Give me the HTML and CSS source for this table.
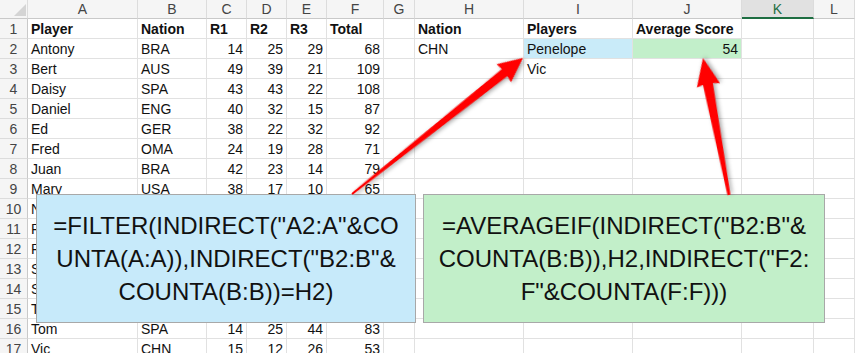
FILE: index.html
```html
<!DOCTYPE html>
<html>
<head>
<meta charset="utf-8">
<link rel="stylesheet" href="styles.css">
</head>
<body>
<div class="sheet">
  <div class="row hdr">
    <span class="corner"><svg width="12" height="12" viewBox="0 0 12 12"><polygon points="12,0 12,12 0,12" fill="#d4d4d4"/></svg></span>
    <span class="ch">A</span><span class="ch">B</span><span class="ch">C</span><span class="ch">D</span><span class="ch">E</span><span class="ch">F</span><span class="ch">G</span><span class="ch">H</span><span class="ch">I</span><span class="ch">J</span><span class="ch sel">K</span><span class="ch">L</span>
  </div>
  <div class="row"><span class="rh">1</span><span class="b">Player</span><span class="b">Nation</span><span class="b">R1</span><span class="b">R2</span><span class="b">R3</span><span class="b">Total</span><span></span><span class="b">Nation</span><span class="b">Players</span><span class="b">Average Score</span><span></span><span></span></div>
  <div class="row"><span class="rh">2</span><span>Antony</span><span>BRA</span><span class="n">14</span><span class="n">25</span><span class="n">29</span><span class="n">68</span><span></span><span>CHN</span><span class="blue">Penelope</span><span class="n green">54</span><span></span><span></span></div>
  <div class="row"><span class="rh">3</span><span>Bert</span><span>AUS</span><span class="n">49</span><span class="n">39</span><span class="n">21</span><span class="n">109</span><span></span><span></span><span>Vic</span><span></span><span></span><span></span></div>
  <div class="row"><span class="rh">4</span><span>Daisy</span><span>SPA</span><span class="n">43</span><span class="n">43</span><span class="n">22</span><span class="n">108</span><span></span><span></span><span></span><span></span><span></span><span></span></div>
  <div class="row"><span class="rh">5</span><span>Daniel</span><span>ENG</span><span class="n">40</span><span class="n">32</span><span class="n">15</span><span class="n">87</span><span></span><span></span><span></span><span></span><span></span><span></span></div>
  <div class="row"><span class="rh">6</span><span>Ed</span><span>GER</span><span class="n">38</span><span class="n">22</span><span class="n">32</span><span class="n">92</span><span></span><span></span><span></span><span></span><span></span><span></span></div>
  <div class="row"><span class="rh">7</span><span>Fred</span><span>OMA</span><span class="n">24</span><span class="n">19</span><span class="n">28</span><span class="n">71</span><span></span><span></span><span></span><span></span><span></span><span></span></div>
  <div class="row"><span class="rh">8</span><span>Juan</span><span>BRA</span><span class="n">42</span><span class="n">23</span><span class="n">14</span><span class="n">79</span><span></span><span></span><span></span><span></span><span></span><span></span></div>
  <div class="row"><span class="rh">9</span><span>Mary</span><span>USA</span><span class="n">38</span><span class="n">17</span><span class="n">10</span><span class="n">65</span><span></span><span></span><span></span><span></span><span></span><span></span></div>
  <div class="row"><span class="rh">10</span><span>Nina</span><span>ENG</span><span class="n">31</span><span class="n">28</span><span class="n">20</span><span class="n">79</span><span></span><span></span><span></span><span></span><span></span><span></span></div>
  <div class="row"><span class="rh">11</span><span>Paul</span><span>GER</span><span class="n">22</span><span class="n">35</span><span class="n">18</span><span class="n">75</span><span></span><span></span><span></span><span></span><span></span><span></span></div>
  <div class="row"><span class="rh">12</span><span>Penelope</span><span>CHN</span><span class="n">20</span><span class="n">16</span><span class="n">19</span><span class="n">55</span><span></span><span></span><span></span><span></span><span></span><span></span></div>
  <div class="row"><span class="rh">13</span><span>Sam</span><span>AUS</span><span class="n">27</span><span class="n">30</span><span class="n">24</span><span class="n">81</span><span></span><span></span><span></span><span></span><span></span><span></span></div>
  <div class="row"><span class="rh">14</span><span>Steve</span><span>USA</span><span class="n">33</span><span class="n">21</span><span class="n">29</span><span class="n">83</span><span></span><span></span><span></span><span></span><span></span><span></span></div>
  <div class="row"><span class="rh">15</span><span>Tara</span><span>OMA</span><span class="n">19</span><span class="n">26</span><span class="n">31</span><span class="n">76</span><span></span><span></span><span></span><span></span><span></span><span></span></div>
  <div class="row"><span class="rh">16</span><span>Tom</span><span>SPA</span><span class="n">14</span><span class="n">25</span><span class="n">44</span><span class="n">83</span><span></span><span></span><span></span><span></span><span></span><span></span></div>
  <div class="row"><span class="rh">17</span><span>Vic</span><span>CHN</span><span class="n">15</span><span class="n">12</span><span class="n">26</span><span class="n">53</span><span></span><span></span><span></span><span></span><span></span><span></span></div>
</div>

<div class="callout callout-blue">
  <p>=FILTER(INDIRECT("A2:A"&amp;CO<br>UNTA(A:A)),INDIRECT("B2:B"&amp;<br>COUNTA(B:B))=H2)</p>
</div>
<div class="callout callout-green">
  <p>=AVERAGEIF(INDIRECT("B2:B"&amp;<br>COUNTA(B:B)),H2,INDIRECT("F2:<br>F"&amp;COUNTA(F:F)))</p>
</div>

<svg class="arrows" width="855" height="353" viewBox="0 0 855 353">
  <polygon class="arrow" transform="translate(352,194) rotate(-38.5)" points="0,-1 195,-4.5 194,-11.5 218.5,0 194,11.5 195,4.5 0,1"/>
  <polygon class="arrow" transform="translate(729,195) rotate(-100.75)" points="0,-1.5 113,-5 111.5,-11.5 139.4,0 111.5,12 113,5 0,1.5"/>
</svg>
</body>
</html>
```

FILE: styles.css
```css
html, body {
  margin: 0;
  padding: 0;
  background: #ffffff;
  overflow: hidden;
}
body {
  width: 855px;
  height: 353px;
  position: relative;
  font-family: "Liberation Sans", Arial, sans-serif;
  color: #111111;
}
.sheet {
  display: flex;
  flex-direction: column;
}
.row {
  display: grid;
  grid-template-columns: 28px 110px 69px 40px 40px 40px 57px 31px 109px 109px 109px 72px 1fr;
  height: 20px;
}
.row > span {
  box-sizing: border-box;
  border-right: 1px solid #e1e1e1;
  border-bottom: 1px solid #e1e1e1;
  font-size: 14px;
  line-height: 20px;
  padding: 0 3px 0 3px;
  white-space: nowrap;
  overflow: hidden;
}
.row.hdr {
  height: 19px;
}
.row.hdr > span {
  background: #f5f5f5;
  border-right: 1px solid #dcdcdc;
  border-bottom: 1px solid #c9c9c9;
  line-height: 19px;
  text-align: center;
  color: #444444;
  font-size: 14px;
}
.row.hdr > span.corner {
  display: flex;
  align-items: flex-end;
  justify-content: flex-end;
  padding: 0 1px 2px 0;
}
.row.hdr > span.sel {
  background: #e1e1e1;
  border-bottom: 2px solid #1e6e42;
  color: #1e6e42;
  line-height: 18px;
}
.row > span.rh {
  background: #f5f5f5;
  border-right: 1px solid #c9c9c9;
  border-bottom: 1px solid #dcdcdc;
  text-align: center;
  color: #444444;
  padding: 0;
}
.row > span.b {
  font-weight: bold;
}
.row > span.n {
  text-align: right;
}
.row > span.blue {
  background: #c9ebf9;
}
.row > span.green {
  background: #c2efca;
}
.callout {
  position: absolute;
  top: 194px;
  height: 129px;
  box-sizing: border-box;
  border: 1px solid #a8a8a8;
  display: flex;
  align-items: center;
  justify-content: center;
}
.callout p {
  margin: 0;
  font-family: "Liberation Sans", Arial, sans-serif;
  font-size: 24px;
  line-height: 33px;
  text-align: center;
  color: #111111;
  white-space: nowrap;
}
.callout-blue {
  left: 36px;
  width: 380px;
  background: #c7eafa;
}
.callout-green {
  left: 423px;
  width: 402px;
  background: #c2efc9;
}
.arrows {
  position: absolute;
  left: 0;
  top: 0;
  pointer-events: none;
}
.arrow {
  fill: #ff0000;
  filter: drop-shadow(1px 2px 2px rgba(0, 0, 0, 0.35));
}
```
